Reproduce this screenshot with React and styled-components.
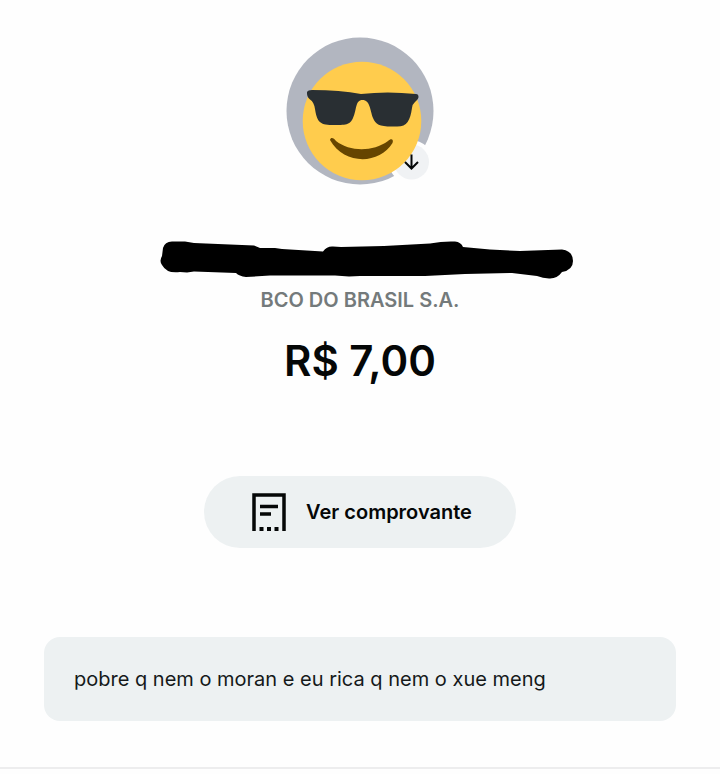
import styled, { createGlobalStyle } from "styled-components";

const GlobalStyle = createGlobalStyle`
    * {
        box-sizing: border-box;
    }
    body {
        margin: 0;
        background: #fefefe;
        color: #050707;
        font-family: Inter, "Liberation Sans", sans-serif;
    }
`
const StyledPage = styled.main`
    display: flex;
    flex-direction: column;
    align-items: center;
    padding: 36px 44px 46px;
    border-bottom: 2px solid #ededee;
`
const StyledAvatar = styled.svg`
    width: 150px;
    height: 150px;
`
const StyledName = styled.svg`
    width: 428px;
    height: 40px;
    margin-top: 54px;
`
const StyledBank = styled.p`
    margin: 8px 0 0;
    color: #747a7b;
    font-size: 20px;
    font-weight: 600;
    line-height: 24px;
`
const StyledAmount = styled.h1`
    margin: 21px 0 0;
    font-size: 42px;
    font-weight: 600;
    line-height: 56px;
`
const StyledButton = styled.button`
    display: flex;
    align-items: center;
    gap: 20px;
    height: 72px;
    margin-top: 87px;
    padding: 0 44px 0 48px;
    border: none;
    border-radius: 36px;
    background: #edf1f2;
    color: inherit;
    font-family: inherit;
    font-size: 20px;
    font-weight: 600;
    cursor: pointer;
`
const StyledReceipt = styled.svg`
    width: 34px;
    height: 38px;
`
const StyledMessage = styled.p`
    align-self: stretch;
    margin: 89px 0 0;
    padding: 28px 30px;
    border-radius: 16px;
    background: #edf1f2;
    color: #15191a;
    font-size: 20px;
    line-height: 28px;
`

function Avatar() {
    return (
        <StyledAvatar viewBox="285 36 150 150" role="img" aria-label="Avatar">
            <circle cx="360" cy="111" r="73.5" fill="#b2b6c0" />
            <circle cx="411" cy="162" r="22" fill="#fefefe" />
            <circle cx="411.5" cy="162" r="17.5" fill="#f0f2f4" />
            <circle cx="362" cy="121" r="59.3" fill="#ffcc4d" />
            <path
                d="M307 92 Q308 90 312 90 Q340 90 361 94 Q387 91 416 94 Q418.500 94 418.500 97 Q418.500 99 415 102 Q412.500 104 412 108 C410 121 407 127 396 126.500 C380 127 376 125 373 118 C370 110 370 100 362.500 100 C355 100 357 110 353 118 C350 125 346 125 332 125 C319 125 317 121 315 109 Q314 102 310 99.500 Q306.500 97 307 92 Z"
                fill="#292f33"
            />
            <path
                d="M330 140 C331 136.500 334 138.500 336 141 C350 152 373 152 388 141 C391 138 394 139 392.500 143 C379 165 344 165 330 140 Z"
                fill="#664500"
            />
            <path
                d="M411.500 154.500 V168 M405 162 L411.500 168.500 L418 162"
                fill="none"
                stroke="#050707"
                strokeWidth="2"
            />
        </StyledAvatar>
    )
}

function HiddenName() {
    return (
        <StyledName viewBox="146 240 428 40" role="img" aria-label="Nome oculto">
            <path
                d="M163 248 Q165 241 173 241.500 L185 241.500 L194 243 L254 245.500 L260 248 L275 248 L282 249 L323 251.500 Q327 246 333 246.500 L341 247 L384 246 L430 243.500 Q443 241 455 241.500 Q461 242 463 247 L490 249.500 L520 251 L562 249.500 Q573 251 573 261 Q573 270 562 272 Q557 279 549 278.500 Q543 278 537 276 L512 273 L465 274 L425 276 L360 276 L349 276.500 L335 275.500 L270 275.500 L246 277 Q239 276 236 273 L194 271.500 L187 272.500 L180 272 Q167 274 162 265 Q159 261 162 256 Z"
                fill="#000"
            />
        </StyledName>
    )
}

function Custom() {
    return (
        <StyledPage>
            <GlobalStyle />
            <Avatar />
            <HiddenName />
            <StyledBank>BCO DO BRASIL S.A.</StyledBank>
            <StyledAmount>R$ 7,00</StyledAmount>
            <StyledButton type="button">
                <StyledReceipt viewBox="0 0 34 38" aria-hidden="true">
                    <path
                        d="M2 38 V2 H32 V38 M8 13.500 H26 M8 21 H19"
                        fill="none"
                        stroke="#050707"
                        strokeWidth="3.500"
                    />
                    <path
                        d="M7.500 34 h4 v4 h-4 z M15 34 h4 v4 h-4 z M22.500 34 h4 v4 h-4 z"
                        fill="#050707"
                    />
                </StyledReceipt>
                Ver comprovante
            </StyledButton>
            <StyledMessage>pobre q nem o moran e eu rica q nem o xue meng</StyledMessage>
        </StyledPage>
    )
}

export default Custom;
